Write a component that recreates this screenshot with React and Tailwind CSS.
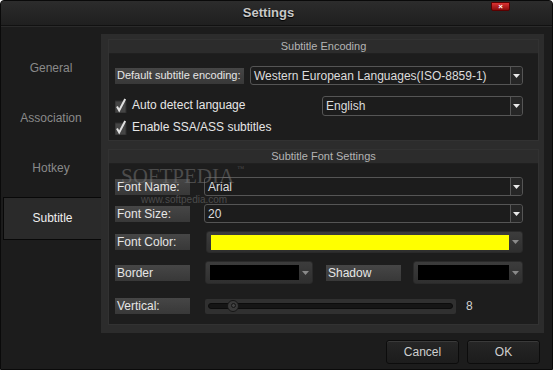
const font = { fontFamily: '"Liberation Sans", Arial, sans-serif' };

const Label = ({ children, className = '', size = 'text-[12px]' }) => (
  <div
    className={`h-[16px] flex items-center px-[2px] whitespace-nowrap overflow-hidden ${size} text-[#e6e6e6] bg-gradient-to-b from-[#464646] to-[#383838] ${className}`}
  >
    {children}
  </div>
);

const Arrow = ({ color = '#e8e8e8' }) => (
  <svg width="7" height="4" viewBox="0 0 7 4">
    <path d="M0 0h7L3.5 4z" fill={color} />
  </svg>
);

const Select = ({ value, className = '' }) => (
  <div
    className={`h-[19px] flex items-stretch border border-[#555] rounded-[3px] bg-[#1c1c1c] ${className}`}
  >
    <div className="flex-1 flex items-center px-[3px] whitespace-nowrap text-[12px] text-[#dcdcdc]">{value}</div>
    <div className="w-[12px] flex items-center justify-center border-l border-[#555] bg-[#262626] rounded-r-[3px]">
      <Arrow />
    </div>
  </div>
);

const ColorBox = ({ color, className = '' }) => (
  <div
    className={`flex items-center gap-[3px] rounded-[3px] border border-[#2a2a2a] bg-gradient-to-b from-[#3c3c3c] to-[#2f2f2f] pl-[4px] pr-[3px] ${className}`}
  >
    <div className="flex-1 h-[15px]" style={{ background: color }} />
    <Arrow color="#8a8a8a" />
  </div>
);

const Check = ({ children }) => (
  <div className="flex items-center h-[18px] gap-[5px]">
    <svg width="12" height="15" viewBox="0 0 12 15" className="shrink-0">
      <rect x="0" y="3" width="11" height="12" fill="#454545" stroke="#2e2e2e" />
      <path d="M2 8.5l2.2 4 6-11.5" stroke="#e0e0e0" strokeWidth="2" fill="none" />
    </svg>
    <span className="text-[12px] text-[#e6e6e6] whitespace-nowrap">{children}</span>
  </div>
);

const GroupHeader = ({ children }) => (
  <div className="h-[14px] flex items-center justify-center bg-[#2c2c2c] border-b border-[#202020] text-[11px] text-[#b4b4b4]">
    {children}
  </div>
);

const Btn = ({ children }) => (
  <button className="w-[73px] h-[24px] rounded-[3px] border border-[#0c0c0c] bg-gradient-to-b from-[#262626] to-[#1c1c1c] shadow-[inset_0_1px_0_#3a3a3a] text-[12px] text-[#cfcfcf]">
    {children}
  </button>
);

export default function App() {
  const nav = ['General', 'Association', 'Hotkey', 'Subtitle'];
  return (
    <div
      className="w-[553px] h-[370px] bg-[#1c1c1c] flex flex-col border border-[#0a0a0a] rounded-t-[4px] overflow-hidden"
      style={font}
    >
      <div className="h-[25px] shrink-0 relative flex items-center justify-center bg-gradient-to-b from-[#2c2c2c] to-[#1f1f1f] border-b border-[#111] shadow-[0_1px_0_#2a2a2a]">
        <span className="text-[13px] font-bold text-[#c8c8c8] -ml-[16px] [text-shadow:0_1px_1px_#000]">Settings</span>
        <div className="absolute top-[1px] right-[42px] w-[19px] h-[9px] rounded-b-[2px] bg-gradient-to-b from-[#d33] to-[#8a0b0b] border border-[#5a0000] flex items-center justify-center">
          <span className="text-[8px] leading-none font-bold text-white">×</span>
        </div>
      </div>

      <div className="flex flex-1 pt-[8px]">
        <div className="w-[100px] shrink-0 pt-[9px] flex flex-col">
          {nav.map((n) =>
            n === 'Subtitle' ? (
              <div key={n} className="h-[50px] flex items-center">
                <div className="ml-[2px] w-[98px] h-[43px] flex items-center justify-center bg-[#2a2a2a] border border-r-0 border-[#080808] text-[12px] text-[#f0f0f0]">
                  {n}
                </div>
              </div>
            ) : (
              <div key={n} className="h-[50px] flex items-center justify-center text-[12px] text-[#8a8a8a]">
                {n}
              </div>
            )
          )}
        </div>

        <div className="flex flex-col flex-1 mr-[8px]">
          <div className="h-[299px] bg-[#2c2c2c] pl-[7px] pr-[5px] pt-[5px] flex flex-col">
            <div className="h-[102px] flex flex-col border border-[#323232]">
              <GroupHeader>Subtitle Encoding</GroupHeader>
              <div className="flex-1 bg-[#1d1d1d] pl-[6px] pr-[15px] pt-[12px]">
                <div className="flex items-center">
                  <Label className="w-[129px]" size="text-[11px]">Default subtitle encoding:</Label>
                  <Select className="flex-1 ml-[6px]" value="Western European Languages(ISO-8859-1)" />
                </div>
                <div className="flex mt-[11px]">
                  <div className="flex-1 flex flex-col gap-[4px]">
                    <Check>Auto detect language</Check>
                    <Check>Enable SSA/ASS subtitles</Check>
                  </div>
                  <Select className="w-[201px] h-[20px]" value="English" />
                </div>
              </div>
            </div>

            <div className="mt-[8px] h-[176px] flex flex-col border border-[#323232] relative">
              <GroupHeader>Subtitle Font Settings</GroupHeader>
              <div className="flex-1 bg-[#1d1d1d] pl-[6px] pr-[15px] pt-[13px] flex flex-col">
                <div className="flex items-center">
                  <Label className="w-[75px]">Font Name:</Label>
                  <Select className="flex-1 ml-[14px]" value="Arial" />
                </div>
                <div className="flex items-center mt-[8px]">
                  <Label className="w-[75px]">Font Size:</Label>
                  <Select className="flex-1 ml-[14px]" value="20" />
                </div>
                <div className="flex items-center mt-[8px]">
                  <Label className="w-[75px]">Font Color:</Label>
                  <ColorBox className="flex-1 ml-[16px] h-[22px]" color="#ffff00" />
                </div>
                <div className="flex items-center mt-[8px]">
                  <Label className="w-[75px]">Border</Label>
                  <ColorBox className="w-[108px] ml-[15px] h-[23px]" color="#000" />
                  <Label className="w-[75px] ml-[13px]">Shadow</Label>
                  <ColorBox className="flex-1 ml-[12px] h-[23px]" color="#000" />
                </div>
                <div className="flex items-center mt-[13px]">
                  <Label className="w-[75px]">Vertical:</Label>
                  <div className="w-[251px] ml-[15px] h-[15px] bg-[#303030] rounded-[2px] flex items-center px-[3px] relative">
                    <div className="flex-1 h-[6px] rounded-full bg-[#151515] border border-[#0c0c0c]" />
                    <div className="absolute left-[22px] top-[1px] w-[12px] h-[12px] rounded-full bg-[#3a3a3a] border border-[#161616] flex items-center justify-center">
                      <div className="w-[5px] h-[5px] rounded-full border border-[#151515] bg-[#444]" />
                    </div>
                  </div>
                  <span className="ml-[10px] text-[12px] text-[#d0d0d0]">8</span>
                </div>
              </div>
              <div
                className="absolute left-[12px] top-[16px] pointer-events-none text-[#7a7a7a] opacity-50 leading-none"
                style={{ fontFamily: '"Liberation Serif", serif' }}
              >
                <span className="text-[21px]">SOFTPEDIA</span>
                <span className="text-[7px] align-top ml-[3px]">™</span>
              </div>
              <div className="absolute left-[32px] top-[45px] pointer-events-none text-[10px] leading-none text-[#7a7a7a] opacity-50">
                www.softpedia.com
              </div>
            </div>
          </div>

          <div className="flex justify-end gap-[8px] mt-[7px] pr-[4px]">
            <Btn>Cancel</Btn>
            <Btn>OK</Btn>
          </div>
        </div>
      </div>
    </div>
  );
}
